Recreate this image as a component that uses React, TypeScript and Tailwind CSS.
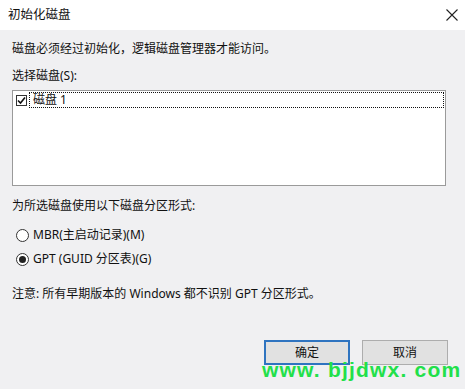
import React from "react";

export default function App() {
  const font = { fontFamily: '"Noto Sans", "Noto Sans CJK SC", sans-serif' };
  return (
    <div
      className="relative w-[465px] h-[389px] bg-[#f0f0f2] text-[12px] text-[#111] overflow-hidden"
      style={font}
    >
      <div className="h-[30px] bg-white flex items-center justify-between pl-[8px] pr-[6px]">
        <span className="text-[12.5px] leading-none">初始化磁盘</span>
        <svg width="14" height="14" viewBox="0 0 14 14">
          <path d="M1.5 1.5 L12.5 12.5 M12.5 1.5 L1.5 12.5" stroke="#222" strokeWidth="1.1" />
        </svg>
      </div>
      <div className="flex flex-col px-[12px]">
        <div className="mt-[11px] h-[16px] leading-[16px]">磁盘必须经过初始化，逻辑磁盘管理器才能访问。</div>
        <div className="mt-[11px] h-[16px] leading-[16px]">选择磁盘(S):</div>
        <div className="mt-[6px] w-[434px] h-[96px] bg-white border border-[#9a9a9a] p-[1px]">
          <div className="flex items-center h-[16px]">
            <div className="ml-[2px] w-[11px] h-[11px] border border-[#333] bg-white flex items-center justify-center">
              <svg width="9" height="9" viewBox="0 0 9 9">
                <path d="M1 4.5 L3.5 7 L8 1.5" stroke="#111" strokeWidth="1.6" fill="none" />
              </svg>
            </div>
            <div className="ml-[2px] flex-1 h-[16px] border border-dotted border-[#111] flex items-center pl-[3px] leading-none">
              磁盘 1
            </div>
          </div>
        </div>
        <div className="mt-[12px] h-[16px] leading-[16px]">为所选磁盘使用以下磁盘分区形式:</div>
        <div className="mt-[13px] flex items-center h-[16px] ml-[4px]">
          <div className="w-[13px] h-[13px] rounded-full border border-[#333] bg-white" />
          <span className="ml-[4px] leading-none">MBR(主启动记录)(M)</span>
        </div>
        <div className="mt-[8px] flex items-center h-[16px] ml-[4px]">
          <div className="w-[13px] h-[13px] rounded-full border border-[#333] bg-white flex items-center justify-center">
            <div className="w-[7px] h-[7px] rounded-full bg-[#222]" />
          </div>
          <span className="ml-[4px] leading-none">GPT (GUID 分区表)(G)</span>
        </div>
        <div className="mt-[19px] h-[16px] leading-[16px]">注意: 所有早期版本的 Windows 都不识别 GPT 分区形式。</div>
        <div className="mt-[38px] flex justify-end gap-[12px] pr-[5px]">
          <div className="w-[86px] h-[25px] bg-[#e1e1e1] border-2 border-[#2f74c0] flex items-center justify-center">确定</div>
          <div className="w-[86px] h-[25px] bg-[#e1e1e1] border border-[#adadad] flex items-center justify-center">取消</div>
        </div>
      </div>
      <div
        className="absolute left-[262px] top-[359px] text-[21px] font-bold text-[#22e04a] tracking-[1.2px] leading-none whitespace-nowrap"
        style={{ fontFamily: '"Liberation Sans", sans-serif' }}
      >
        www. bjjdwx. com
      </div>
    </div>
  );
}
